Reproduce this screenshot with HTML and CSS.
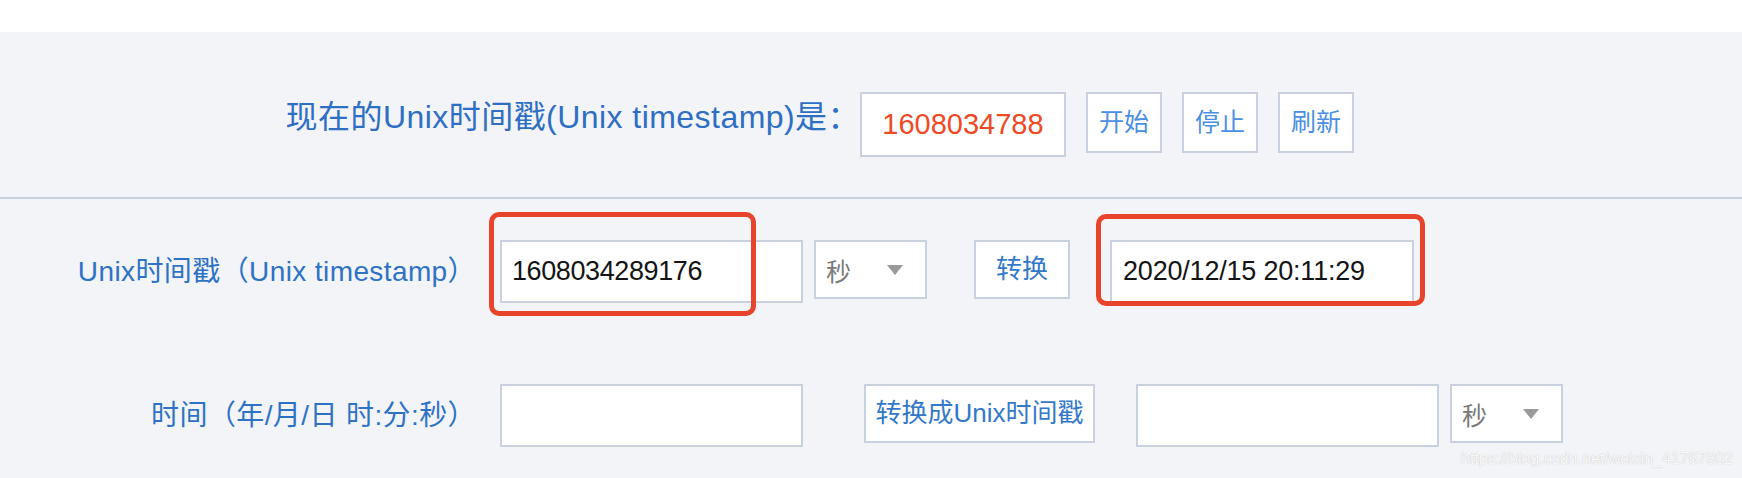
FILE: index.html
```html
<!DOCTYPE html>
<html lang="zh-CN">
<head>
<meta charset="utf-8">
<title>Unix时间戳</title>
<link rel="stylesheet" href="styles.css">
</head>
<body>
<div class="topbar"></div>
<section class="now">
  <div class="now-row">
    <span class="now-label">现在的Unix时间戳(Unix timestamp)是：</span>
    <div class="now-value">1608034788</div>
    <button class="btn btn-now">开始</button>
    <button class="btn btn-now">停止</button>
    <button class="btn btn-now">刷新</button>
  </div>
</section>
<section class="convert">
  <div class="row">
    <label class="row-label">Unix时间戳（Unix timestamp）</label>
    <input class="field field-a" type="text" value="1608034289176">
    <div class="select sel-a"><span>秒</span><i class="caret"></i></div>
    <button class="btn btn-conv btn-a">转换</button>
    <input class="field field-b" type="text" value="2020/12/15 20:11:29">
  </div>
  <div class="row row-second">
    <label class="row-label">时间（年/月/日 时:分:秒）</label>
    <input class="field field-a" type="text" value="">
    <button class="btn btn-conv btn-b">转换成Unix时间戳</button>
    <input class="field field-c" type="text" value="">
    <div class="select sel-b"><span>秒</span><i class="caret"></i></div>
  </div>
</section>
<div class="mark mark-1"></div>
<div class="mark mark-2"></div>
<div class="watermark">https://blog.csdn.net/weixin_41767802</div>
</body>
</html>
```

FILE: styles.css
```css
html, body {
  margin: 0;
  padding: 0;
}
body {
  position: relative;
  width: 1742px;
  height: 478px;
  overflow: hidden;
  background: #f3f4f8;
  font-family: "Liberation Sans", "Noto Sans CJK SC", sans-serif;
}
.topbar {
  height: 32px;
  background: #ffffff;
}
.now {
  height: 165px;
  border-bottom: 2px solid #c9cfdc;
}
.now-row {
  display: flex;
  align-items: flex-start;
  padding-top: 60px;
}
.now-label {
  flex: 0 0 860px;
  text-align: right;
  font-size: 32px;
  letter-spacing: 0.45px;
  line-height: 50px;
  color: #2e6fc3;
  white-space: nowrap;
}
.now-value {
  box-sizing: border-box;
  width: 206px;
  height: 65px;
  border: 2px solid #c9d1e0;
  background: #fff;
  color: #ee4a26;
  font-size: 29px;
  line-height: 61px;
  text-align: center;
}
.btn {
  box-sizing: border-box;
  border: 2px solid #c9d1e0;
  background: #fff;
  padding: 0;
  font-family: "Liberation Sans", "Noto Sans CJK SC", sans-serif;
  cursor: pointer;
}
.btn-now {
  width: 76px;
  height: 61px;
  margin-left: 20px;
  font-size: 25px;
  line-height: 57px;
  color: #4a8fe2;
}
.convert {
  padding-top: 41px;
}
.row {
  display: flex;
  align-items: flex-start;
  height: 63px;
}
.row-second {
  margin-top: 81px;
}
.row-label {
  flex: 0 0 500px;
  box-sizing: border-box;
  padding-right: 24px;
  text-align: right;
  font-size: 28px;
  letter-spacing: 0.4px;
  line-height: 63px;
  color: #2e72c6;
  white-space: nowrap;
}
.field {
  box-sizing: border-box;
  height: 63px;
  border: 2px solid #c9d1e0;
  background: #fff;
  margin: 0;
  padding: 0 10px;
  font-family: "Liberation Sans", "Noto Sans CJK SC", sans-serif;
  font-size: 27px;
  letter-spacing: -0.4px;
  color: #141414;
  outline: none;
}
.field-a { width: 303px; }
.field-b { width: 304px; margin-left: 40px; padding-left: 11px; letter-spacing: -0.2px; }
.field-c { width: 303px; margin-left: 41px; }
.select {
  box-sizing: border-box;
  display: flex;
  align-items: center;
  justify-content: space-between;
  width: 113px;
  height: 59px;
  margin-left: 11px;
  padding: 0 22px 0 10px;
  border: 2px solid #c9d1e0;
  background: #fff;
  font-size: 25px;
  color: #7a7a7a;
}
.caret {
  width: 0;
  height: 0;
  border-left: 8px solid transparent;
  border-right: 8px solid transparent;
  border-top: 10px solid #9a9a9a;
}
.btn-conv {
  height: 59px;
  font-size: 26px;
  line-height: 55px;
  color: #3479c9;
}
.btn-a { width: 96px; margin-left: 47px; }
.btn-b { width: 231px; margin-left: 61px; }
.mark {
  position: absolute;
  box-sizing: border-box;
  border: 5px solid #e8432b;
  border-radius: 10px;
}
.mark-1 { left: 489px; top: 212px; width: 267px; height: 104px; }
.mark-2 { left: 1096px; top: 214px; width: 329px; height: 92px; }
.watermark {
  position: absolute;
  left: 1461px;
  top: 451px;
  font-size: 16px;
  line-height: 16px;
  color: rgba(255, 255, 255, 0.92);
  text-shadow: 0 0 1px rgba(120, 120, 120, 0.5);
  white-space: nowrap;
}
```
